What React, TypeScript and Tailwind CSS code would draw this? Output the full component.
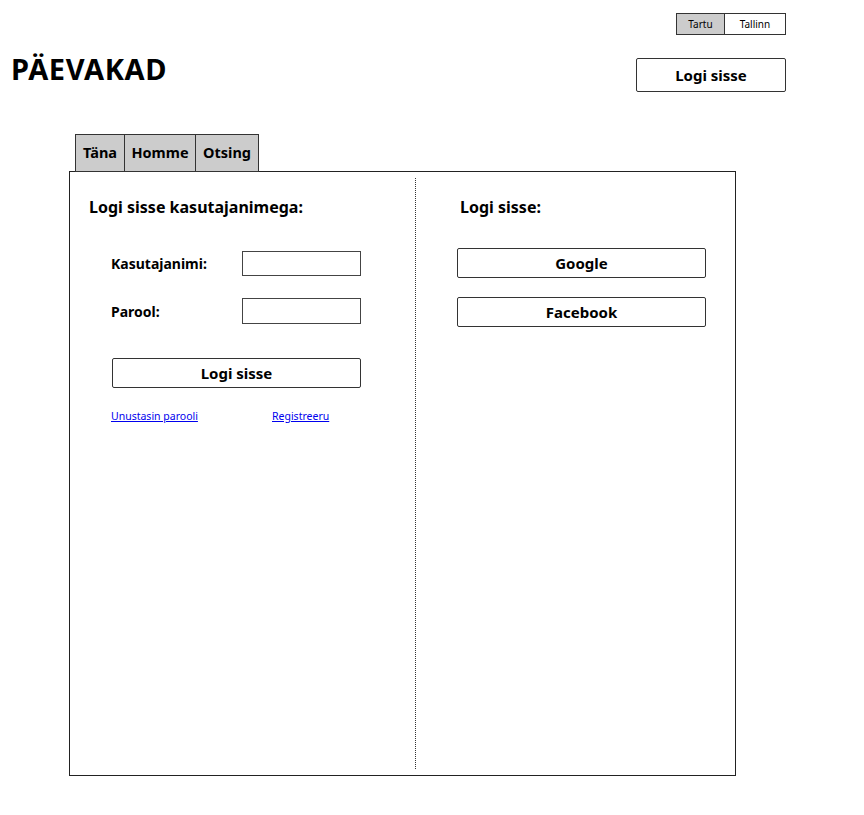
import React from 'react';

const font = { fontFamily: '"Noto Sans", "Open Sans", sans-serif' };

const SketchButton: React.FC<{ label: string; className?: string }> = ({ label, className = '' }) => (
  <button
    className={`flex items-center justify-center border border-[#333] bg-white text-[15px] font-bold text-black rounded-[2px] ${className}`}
  >
    {label}
  </button>
);

const tabs = [
  { label: 'Täna', w: 'w-[50px] border-l' },
  { label: 'Homme', w: 'w-[71px]' },
  { label: 'Otsing', w: 'w-[63px]' },
];

const App: React.FC = () => {
  return (
    <div className="relative h-[815px] w-[864px] bg-white text-black" style={font}>
      <div className="flex items-start justify-between pl-[11px] pr-[78px]">
        <h1 className="mt-[52px] text-[29px] font-bold leading-[34px] tracking-[0.6px]">PÄEVAKAD</h1>
        <div className="flex flex-col items-end pt-[13px]">
          <div className="flex h-[22px] border border-[#333] text-[10px] leading-none">
            <span className="flex w-[48px] items-center justify-center border-r border-[#333] bg-[#cccccc]">Tartu</span>
            <span className="flex w-[60px] items-center justify-center bg-white">Tallinn</span>
          </div>
          <SketchButton label="Logi sisse" className="mt-[23px] h-[34px] w-[150px]" />
        </div>
      </div>

      <div className="mt-[42px] flex pl-[75px]">
        {tabs.map((t) => (
          <div
            key={t.label}
            className={`flex h-[38px] items-center justify-center bg-[#cccccc] border-t border-b border-r border-[#333] text-[14.5px] font-bold ${t.w}`}
          >
            {t.label}
          </div>
        ))}
      </div>

      <div className="ml-[69px] -mt-px flex h-[605px] w-[667px] border border-[#222] bg-white">
        <div className="w-[345px] pl-[19px] pt-[23px]">
          <h2 className="text-[16px] font-bold leading-[24px]">Logi sisse kasutajanimega:</h2>
          <div className="mt-[32px] flex flex-col gap-[22px] pl-[22px]">
            <div className="flex items-center">
              <span className="w-[131px] text-[14px] font-bold">Kasutajanimi:</span>
              <div className="h-[25px] w-[119px] border border-[#444] bg-white" />
            </div>
            <div className="flex items-center">
              <span className="w-[131px] text-[14px] font-bold">Parool:</span>
              <div className="h-[26px] w-[119px] border border-[#444] bg-white" />
            </div>
          </div>
          <SketchButton label="Logi sisse" className="ml-[23px] mt-[34px] h-[30px] w-[249px]" />
          <div className="mt-[21px] flex pl-[22px] text-[10.5px] text-[#0000ee] underline">
            <span className="w-[161px]">Unustasin parooli</span>
            <span>Registreeru</span>
          </div>
        </div>
        <div className="my-[6px] border-l border-dotted border-[#333]" />
        <div className="flex-1 pl-[44px] pt-[23px]">
          <h2 className="text-[16px] font-bold leading-[24px]">Logi sisse:</h2>
          <div className="-ml-[3px] mt-[29px] flex flex-col gap-[19px]">
            <SketchButton label="Google" className="h-[30px] w-[249px]" />
            <SketchButton label="Facebook" className="h-[30px] w-[249px]" />
          </div>
        </div>
      </div>
    </div>
  );
};

export default App;
